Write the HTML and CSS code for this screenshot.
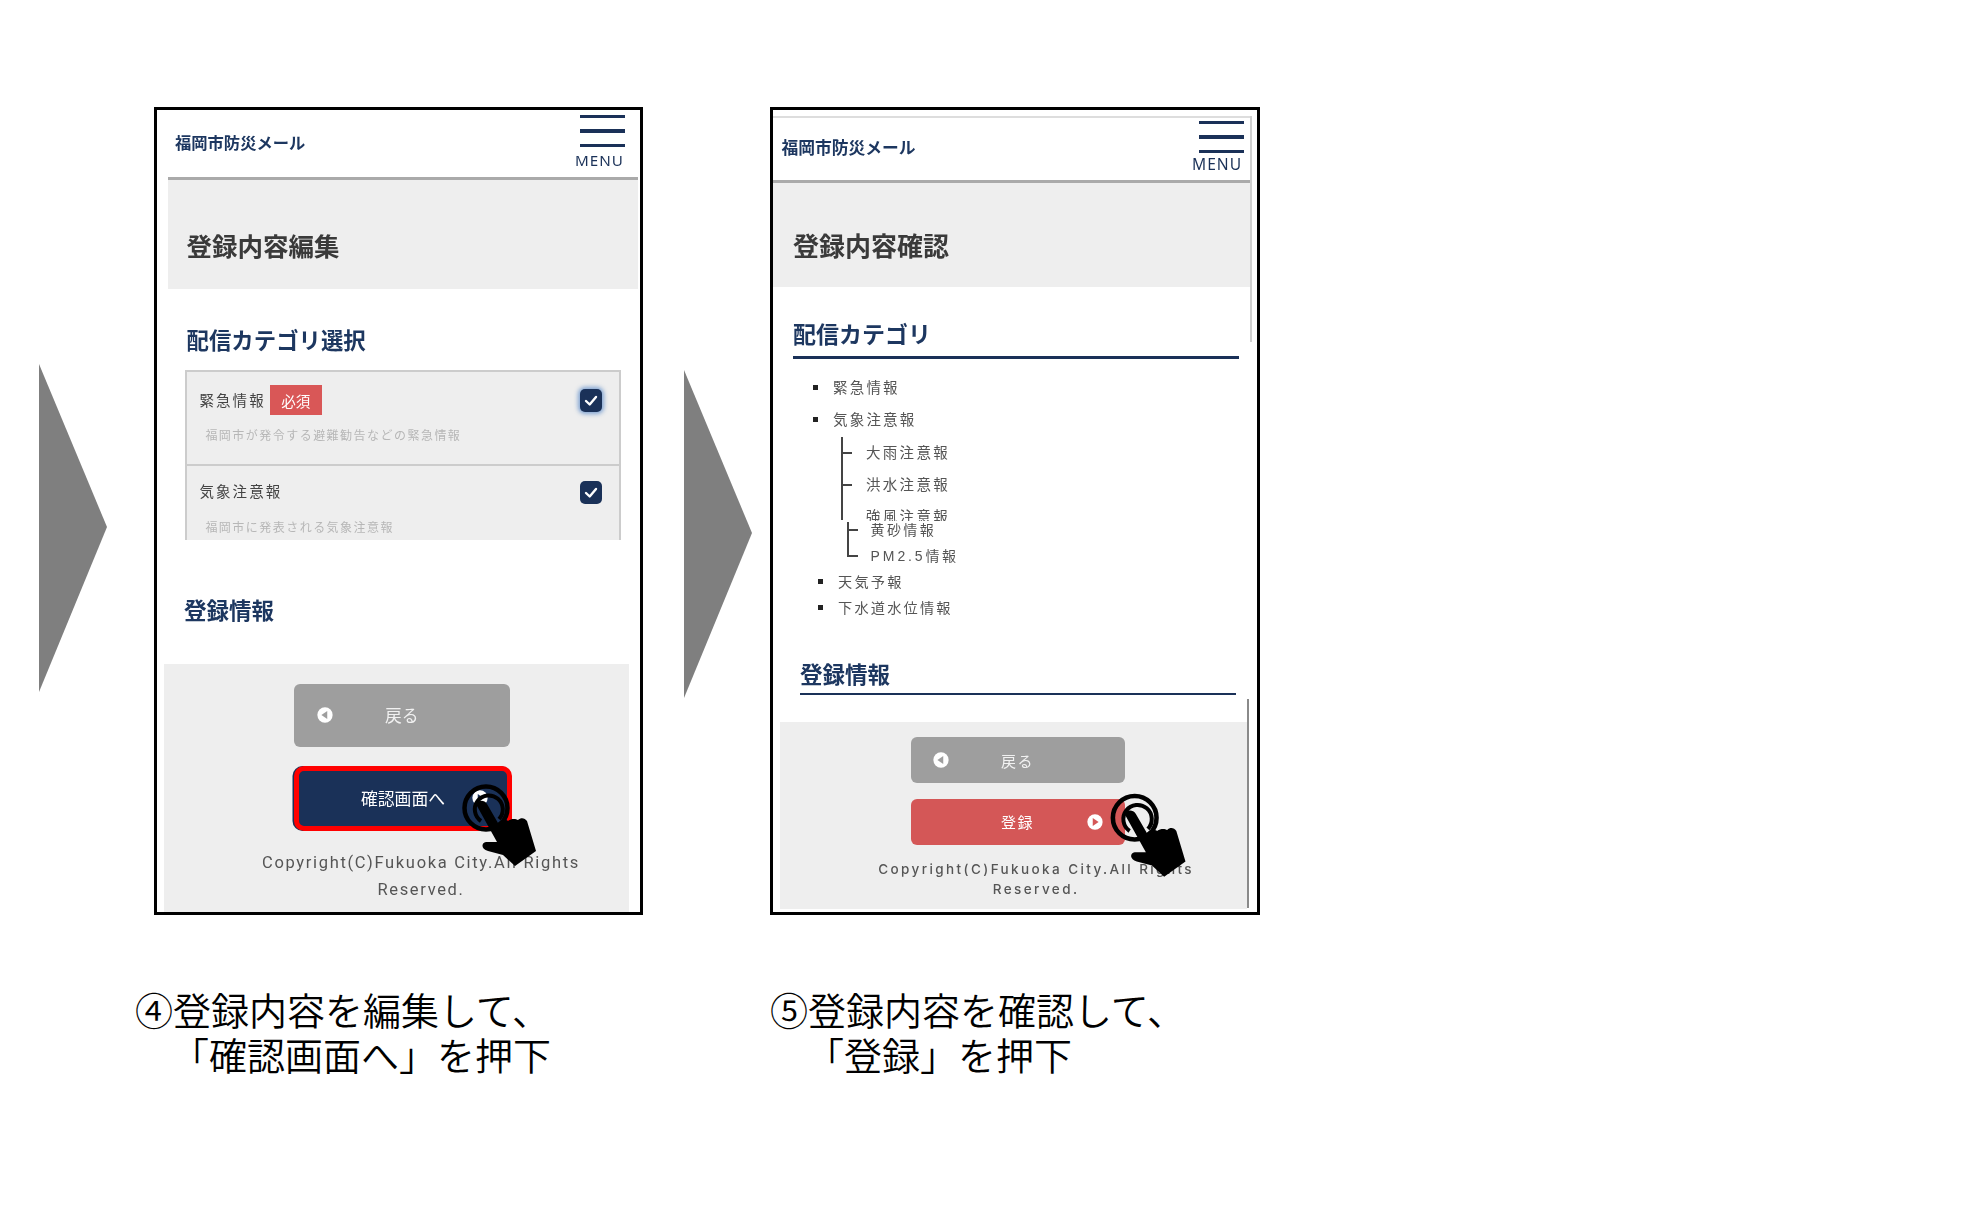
FILE: index.html
```html
<!DOCTYPE html>
<html lang="ja">
<head>
<meta charset="utf-8">
<title>登録手順</title>
<link rel="stylesheet" href="styles.css">
</head>
<body>
<svg class="defs" width="0" height="0" aria-hidden="true">
  <symbol id="tap" viewBox="0 0 130 130">
    <circle cx="46" cy="49" r="21.5" fill="none" stroke="#000" stroke-width="4.5"/>
    <path d="M59 60 A14 14 0 1 0 41 62" fill="none" stroke="#000" stroke-width="4"/>
    <path d="M37 47 C36 41 44 40 47 45 L58 64 C62 60 67 61 68 62 C72 59 76 60 78 61 C81 58 85 59 87 62 L96 92 L75 107 L63 96 L48 92 C41 90 41 84 46 83 L57 83 Z" fill="#000"/>
  </symbol>
</svg>
<main class="slide">
  <svg class="arrow arrow-a" viewBox="0 0 68 328" preserveAspectRatio="none" aria-hidden="true"><polygon points="0,0 68,163 0,328"/></svg>
  <section class="step step-a">
    <div class="phone">
      <header class="head head-a">
        <span class="logo">福岡市防災メール</span>
        <div class="menu menu-a"><i></i><i></i><i></i><span>MENU</span></div>
      </header>
      <div class="band band-a"><h1>登録内容編集</h1></div>
      <h2 class="sec sec-a1">配信カテゴリ選択</h2>
      <div class="picker">
        <div class="pick pick-1">
          <div class="pick-row">
            <span class="pick-label">緊急情報</span><span class="badge">必須</span>
            <span class="check check-focus"><svg viewBox="0 0 22 22"><path d="M6 11.5 L9.7 15 L16 7.5"/></svg></span>
          </div>
          <p class="pick-note">福岡市が発令する避難勧告などの緊急情報</p>
        </div>
        <div class="pick pick-2">
          <div class="pick-row">
            <span class="pick-label">気象注意報</span>
            <span class="check"><svg viewBox="0 0 22 22"><path d="M6 11.5 L9.7 15 L16 7.5"/></svg></span>
          </div>
          <p class="pick-note">福岡市に発表される気象注意報</p>
        </div>
      </div>
      <h2 class="sec sec-a2">登録情報</h2>
      <footer class="foot foot-a">
        <a class="btn btn-back btn-a">
          <svg class="ico" viewBox="0 0 20 20"><circle cx="10" cy="10" r="8.5" fill="#fff"/><path d="M12.5 5.5 V14.5 L6 10 Z" fill="#9e9e9e"/></svg>
          <span>戻る</span>
        </a>
        <a class="btn btn-next">
          <span class="gap"></span>
          <span>確認画面へ</span>
          <svg class="ico ico-r" viewBox="0 0 20 20"><circle cx="10" cy="10" r="8.5" fill="#fff"/><path d="M7.5 5.5 V14.5 L14 10 Z" fill="#1a3158"/></svg>
        </a>
        <p class="copy copy-a">Copyright(C)Fukuoka City.All Rights Reserved.</p>
      </footer>
      <svg class="tap tap-a" aria-hidden="true"><use href="#tap"/></svg>
    </div>
    <p class="cap cap-a">④登録内容を編集して、<br><span class="cap-2">「確認画面へ」を押下</span></p>
  </section>

  <svg class="arrow arrow-b" viewBox="0 0 68 328" preserveAspectRatio="none" aria-hidden="true"><polygon points="0,0 68,163 0,328"/></svg>
  <section class="step step-b">
    <div class="phone">
      <div class="topline"></div>
      <header class="head head-b">
        <span class="logo logo-b">福岡市防災メール</span>
        <div class="menu menu-b"><i></i><i></i><i></i><span>MENU</span></div>
      </header>
      <div class="band band-b"><h1>登録内容確認</h1></div>
      <h2 class="sec sec-b1">配信カテゴリ</h2>
      <ul class="cats">
        <li class="cat">緊急情報</li>
        <li class="cat">気象注意報</li>
      </ul>
      <ul class="tree tree-1">
        <li>大雨注意報</li>
        <li>洪水注意報</li>
        <li class="cut">強風注意報</li>
      </ul>
      <ul class="tree tree-2">
        <li>黄砂情報</li>
        <li><span class="latin">PM2.5</span>情報</li>
      </ul>
      <ul class="cats cats-2">
        <li class="cat">天気予報</li>
        <li class="cat">下水道水位情報</li>
      </ul>
      <h2 class="sec sec-b2">登録情報</h2>
      <footer class="foot foot-b">
        <a class="btn btn-back btn-b">
          <svg class="ico" viewBox="0 0 20 20"><circle cx="10" cy="10" r="8.5" fill="#fff"/><path d="M12.5 5.5 V14.5 L6 10 Z" fill="#9e9e9e"/></svg>
          <span>戻る</span>
        </a>
        <a class="btn btn-reg btn-b">
          <span class="gap"></span>
          <span>登録</span>
          <svg class="ico ico-r" viewBox="0 0 20 20"><circle cx="10" cy="10" r="8.5" fill="#fff"/><path d="M7.5 5.5 V14.5 L14 10 Z" fill="#d45757"/></svg>
        </a>
        <p class="copy copy-b">Copyright(C)Fukuoka City.All Rights Reserved.</p>
      </footer>
      <div class="edge edge-top"></div>
      <div class="edge edge-low"></div>
      <svg class="tap tap-b" aria-hidden="true"><use href="#tap"/></svg>
    </div>
    <p class="cap cap-b">⑤登録内容を確認して、<br><span class="cap-2">「登録」を押下</span></p>
  </section>
</main>
</body>
</html>
```
FILE: styles.css
```css
* { box-sizing: border-box; }
html, body { margin: 0; background: #fff; }
body { font-family: "Noto Sans CJK JP", "Noto Sans", sans-serif; color: #333; width: 1964px; height: 1215px; overflow: hidden; }
.defs { position: absolute; }
h1, h2, p, ul { margin: 0; padding: 0; }
ul { list-style: none; }

.slide { display: flex; align-items: flex-start; padding: 107px 0 0 39px; }
.arrow { flex: none; width: 68px; height: 328px; fill: #7f7f7f; }
.arrow-a { margin: 257px 47px 0 0; }
.arrow-b { margin: 263px 18px 0 41px; }
.step { flex: none; width: 489px; }
.step-b { width: 490px; }

.phone { position: relative; width: 100%; height: 808px; border: 3px solid #000; background: #fff; overflow: hidden; display: flex; flex-direction: column; }
.phone > :not(.tap) { filter: blur(.4px); }

/* header */
.head { flex: none; display: flex; justify-content: space-between; align-items: center; border-bottom: 3px solid #aaa; }
.head-a { height: 70px; margin: 0 2px 0 11px; padding: 0 0 3px 7px; }
.head-b { height: 64.5px; margin: 0 6px 0 0; padding: 0 0 3px 8.5px; }
.logo { font-size: 16.3px; font-weight: 700; color: #1d3760; line-height: 1; }
.logo-b { font-size: 16.75px; }
.menu { display: flex; flex-direction: column; align-self: flex-start; }
.menu i { display: block; height: 3.5px; background: #1a3158; }
.menu span { font-family: "Noto Sans", sans-serif; color: #1a3158; line-height: 15px; letter-spacing: 1px; }
.menu-a { width: 50px; margin: 4.5px 13px 0 0; gap: 11px; }
.menu-a i { width: 45px; margin-left: 5px; }
.menu-a span { margin-top: -5px; font-size: 15.2px; }
.menu-b { width: 52px; margin: 2.5px 7px 0 0; gap: 11px; }
.menu-b i { width: 45px; margin-left: 7px; }
.menu-b span { margin-top: -7px; font-size: 15.6px; }

/* title band */
.band { flex: none; background: #eee; display: flex; align-items: center; }
.band h1 { font-weight: 700; color: #3a3a3a; line-height: 1.2; }
.band-a { height: 109px; margin: 0 2px 0 11px; padding: 21px 0 0 18.5px; }
.band-a h1 { font-size: 25.5px; }
.band-b { height: 104px; margin-right: 6px; padding: 20px 0 0 20px; }
.band-b h1 { font-size: 26px; }

/* section headings */
.sec { flex: none; font-weight: 700; color: #1d3760; line-height: 30px; }
.sec-a1 { font-size: 22.4px; margin: 35px 0 0 29.6px; }
.sec-a2 { font-size: 22.5px; margin: 54px 0 0 27px; }
.sec-b1 { font-size: 23px; width: 446px; margin: 31px 0 0 20px; border-bottom: 3px solid #1a3158; height: 41px; }
.sec-b2 { font-size: 22.5px; width: 436px; margin: 37.6px 0 0 27px; border-bottom: 2px solid #1a3158; height: 37px; }

/* first phone: category picker */
.picker { flex: none; width: 436px; height: 170px; margin: 16px 0 0 28.4px; overflow: hidden; background: #eee; border: 2px solid #ccc; border-bottom: 0; }
.pick-1 { height: 94px; padding-top: 13px; border-bottom: 2px solid #ccc; }
.pick-2 { padding-top: 10px; }
.pick-row { display: flex; align-items: center; height: 30px; padding: 0 17.5px 0 12px; }
.pick-label { font-size: 14.5px; letter-spacing: 2.1px; color: #444; margin-bottom: 2px; }
.badge { margin-left: 4px; width: 52px; height: 30px; background: #d95757; color: #fff; font-size: 14.5px; display: flex; align-items: center; justify-content: center; }
.check { margin-left: auto; width: 22px; height: 23px; border-radius: 5px; background: #1a3158; display: block; }
.check svg { display: block; width: 22px; height: 23px; fill: none; stroke: #fff; stroke-width: 2.4; stroke-linecap: round; stroke-linejoin: round; }
.check-focus { box-shadow: 0 0 4px 2px rgba(70, 125, 195, .65); }
.pick-2 .check { margin-top: 3px; }
.pick-note { margin: 10.5px 0 0 18px; font-size: 12px; letter-spacing: 1.47px; line-height: 18px; color: #b7b7b7; white-space: nowrap; }
.pick-2 .pick-note { margin-top: 11.5px; }

/* footers */
.foot { flex: none; background: #eee; }
.foot-a { width: 465px; height: 248px; margin: 40px 0 0 7px; padding: 20px 0 0 130px; }
.foot-b { width: 467px; height: 187px; margin: 27.7px 0 0 7px; padding: 15px 0 0 130.6px; }

.btn { display: grid; grid-template-columns: 1fr auto 1fr; align-items: center; color: #fff; border-radius: 6px; }
.btn-back { background: #9e9e9e; color: #f1f1f1; }
.btn-a { width: 215.6px; height: 62.6px; padding: 0 22px; font-size: 16.8px; }
.btn-next { width: 218px; height: 65px; margin-top: 19px; padding: 0 18px; font-size: 16.8px; background: #1a3158; border: 5px solid #f00; border-radius: 10px; box-shadow: -1.5px 0 0 #1a3158; }
.btn-b { width: 214px; height: 46px; padding: 0 21px; font-size: 15px; letter-spacing: 1.5px; }
.btn-reg { margin-top: 15.5px; background: #d45757; }
.ico { width: 18px; height: 18px; display: block; }
.ico-r { justify-self: end; }

.copy { text-align: center; font-family: Roboto, "Noto Sans", sans-serif; color: #555; }
.copy-a { width: 330px; margin: 18.5px 0 0 -38px; font-size: 16.5px; line-height: 27px; letter-spacing: 1.67px; }
.copy-b { width: 345px; margin: 14.5px 0 0 -47px; font-family: "Inter", Roboto, sans-serif; font-size: 13.5px; line-height: 20px; letter-spacing: 2.4px; font-weight: 500; }

/* second phone */
.topline { flex: none; height: 2px; margin: 6px 6px 0 0; background: #ddd; }
.edge { position: absolute; width: 2px; }
.edge-top { left: 477px; top: 6px; height: 226px; background: #d0d0d0; }
.edge-low { left: 474px; top: 589px; height: 209px; background: #8a8a8a; }

.cats { flex: none; margin: 12px 0 0 60px; font-size: 14.5px; color: #555; letter-spacing: 2.2px; }
.cat { position: relative; height: 32.2px; line-height: 32.2px; }
.cat::before { content: ""; position: absolute; left: -20px; top: 14px; width: 5px; height: 5px; background: #222; }
.cats-2 { margin: 0 0 0 65px; font-size: 14.2px; }
.cats-2 .cat { height: 26px; line-height: 26px; }
.cats-2 .cat::before { top: 11px; }

.tree { position: relative; flex: none; font-size: 14.5px; color: #555; letter-spacing: 2.3px; }
.tree li { position: relative; }
.tree li::before { content: ""; position: absolute; top: 50%; height: 2px; width: 11px; background: #444; }
.tree::before { content: ""; position: absolute; width: 2px; background: #444; }
.tree-1 { margin: 1px 0 0 93px; }
.tree-1 li { height: 32.2px; line-height: 32.2px; }
.tree-1 li::before { left: -25px; }
.tree-1::before { left: -25px; top: 1px; height: 83px; }
.tree-1 .cut { height: 21px; overflow: hidden; }
.tree-1 .cut::before { top: 15px; }
.tree-2 { margin: -5.7px 0 0 97.6px; font-size: 14px; letter-spacing: 2.35px; }
.tree-2 li { height: 26.2px; line-height: 26.2px; }
.tree-2 li::before { left: -24px; }
.tree-2::before { left: -24px; top: 6px; height: 35px; }
.latin { font-family: "Liberation Sans", sans-serif; letter-spacing: 2.9px; }

/* hand overlay */
.tap { position: absolute; pointer-events: none; }
.tap-a { left: 283px; top: 649px; width: 130px; height: 130px; }
.tap-b { left: 315px; top: 658px; width: 132px; height: 132px; }

/* captions */
.cap { margin-top: 71px; font-size: 38px; line-height: 45px; color: #000; font-weight: 350; white-space: nowrap; }
.cap-a { margin-left: -19px; }
.cap-b { margin-left: 0; }
.cap-2 { padding-left: 36px; }
```
